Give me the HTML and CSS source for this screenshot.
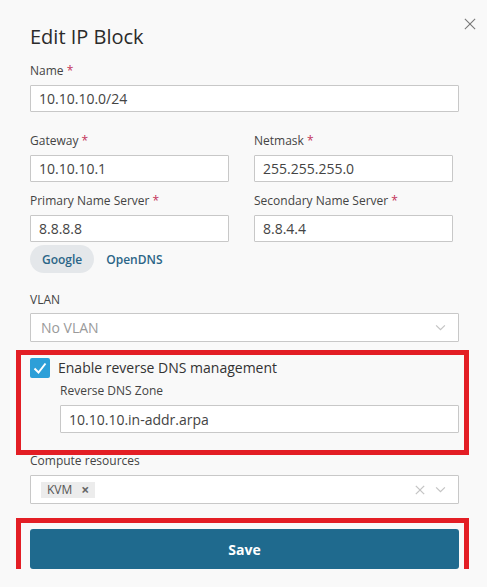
FILE: index.html
```html
<!DOCTYPE html>
<html lang="en">
<head>
    <meta charset="UTF-8">
    <meta name="viewport" content="width=device-width, initial-scale=1.0">
    <title>Edit IP Block</title>
    <link rel="stylesheet" href="styles.css">
</head>
<body>
<div class="modal">
    <button class="close-btn" aria-label="Close">
        <svg viewBox="0 0 14 14" fill="none" stroke="currentColor" stroke-width="1.2">
            <line x1="1" y1="1" x2="13" y2="13"></line>
            <line x1="13" y1="1" x2="1" y2="13"></line>
        </svg>
    </button>

    <h1 class="modal-title">Edit IP Block</h1>

    <form class="ip-form">
        <div class="field field-name">
            <label>Name <span class="req">*</span></label>
            <input class="text-input" type="text" value="10.10.10.0/24">
        </div>

        <div class="row row-gateway">
            <div class="field">
                <label>Gateway <span class="req">*</span></label>
                <input class="text-input" type="text" value="10.10.10.1">
            </div>
            <div class="field">
                <label>Netmask <span class="req">*</span></label>
                <input class="text-input" type="text" value="255.255.255.0">
            </div>
        </div>

        <div class="row row-dns">
            <div class="field">
                <label>Primary Name Server <span class="req">*</span></label>
                <input class="text-input" type="text" value="8.8.8.8">
            </div>
            <div class="field">
                <label>Secondary Name Server <span class="req">*</span></label>
                <input class="text-input" type="text" value="8.8.4.4">
            </div>
        </div>

        <div class="dns-presets">
            <button type="button" class="preset active">Google</button>
            <button type="button" class="preset">OpenDNS</button>
        </div>

        <div class="field field-vlan">
            <label>VLAN</label>
            <div class="select">
                <span class="placeholder">No VLAN</span>
                <span class="select-icons">
                    <svg class="chevron" viewBox="0 0 12 8" fill="none" stroke="currentColor" stroke-width="1.4">
                        <polyline points="1,1.5 6,6.5 11,1.5"></polyline>
                    </svg>
                </span>
            </div>
        </div>

        <div class="reverse-dns highlight">
            <label class="check">
                <span class="check-box">
                    <svg viewBox="0 0 20 20" fill="none" stroke="white" stroke-width="2">
                        <polyline points="4.5,10.5 8.5,14.5 15.5,5.5"></polyline>
                    </svg>
                </span>
                <span>Enable reverse DNS management</span>
            </label>
            <div class="field field-zone">
                <label>Reverse DNS Zone</label>
                <input class="text-input" type="text" value="10.10.10.in-addr.arpa">
            </div>
        </div>

        <div class="field field-compute">
            <label>Compute resources</label>
            <div class="select">
                <span class="tag">KVM <span class="tag-x">&times;</span></span>
                <span class="select-icons">
                    <svg class="clear" viewBox="0 0 12 12" fill="none" stroke="currentColor" stroke-width="1.5">
                        <line x1="1" y1="1" x2="11" y2="11"></line>
                        <line x1="11" y1="1" x2="1" y2="11"></line>
                    </svg>
                    <svg class="chevron" viewBox="0 0 12 8" fill="none" stroke="currentColor" stroke-width="1.4">
                        <polyline points="1,1.5 6,6.5 11,1.5"></polyline>
                    </svg>
                </span>
            </div>
        </div>

        <div class="submit highlight">
            <button type="submit" class="save-btn">Save</button>
        </div>
    </form>
</div>
</body>
</html>
```

FILE: styles.css
```css
* {
    margin: 0;
    padding: 0;
    box-sizing: border-box;
    font-family: "Open Sans", "Liberation Sans", sans-serif;
}

body {
    background-color: #f9f9f9;
    color: #333;
}

.modal {
    position: relative;
    padding: 23px 28px 0 30px;
}

.close-btn {
    position: absolute;
    top: 18px;
    right: 11px;
    width: 12px;
    height: 12px;
    border: none;
    background: none;
    color: #777;
    cursor: pointer;
}

.close-btn svg {
    display: block;
    width: 12px;
    height: 12px;
}

.modal-title {
    font-size: 20px;
    font-weight: 500;
    line-height: 28px;
    color: #2b2b2b;
    margin-bottom: 12px;
}

.field label {
    display: block;
    font-size: 12px;
    line-height: 16px;
    color: #444;
    margin-bottom: 6px;
}

.req {
    color: #c3325a;
}

.text-input {
    display: block;
    width: 100%;
    height: 27px;
    padding: 0 8px;
    border: 1px solid #c8c8c8;
    border-radius: 1px;
    background-color: #fff;
    font-size: 14px;
    color: #444;
    outline: none;
}

.row {
    display: grid;
    grid-template-columns: 199px 199px;
    gap: 25px;
}

.row-gateway {
    margin-top: 21px;
}

.row-dns {
    margin-top: 11px;
}

.dns-presets {
    display: flex;
    margin-top: 3px;
}

.preset {
    height: 28px;
    padding: 0 12px;
    border: none;
    border-radius: 14px;
    background: none;
    font-size: 12px;
    font-weight: 600;
    color: #2b6587;
    cursor: pointer;
}

.preset.active {
    background-color: #e4e7ea;
}

.field-vlan {
    margin-top: 19px;
}

.field-vlan label {
    margin-bottom: 5px;
}

.select {
    display: flex;
    align-items: center;
    height: 29px;
    padding: 0 12px 0 10px;
    border: 1px solid #c8c8c8;
    border-radius: 1px;
    background-color: #fff;
}

.placeholder {
    font-size: 14px;
    color: #9a9a9a;
}

.select-icons {
    margin-left: auto;
    display: flex;
    align-items: center;
    gap: 10px;
    color: #c4c4c4;
}

.chevron {
    width: 11px;
    height: 7px;
}

.clear {
    width: 10px;
    height: 10px;
}

/* Annotation frame drawn around a block */
.highlight {
    position: relative;
}

.highlight::after {
    content: "";
    position: absolute;
    left: -14px;
    right: -10px;
    border: 5px solid #e31e25;
    pointer-events: none;
}

.reverse-dns {
    margin-top: 16px;
}

.reverse-dns::after {
    top: -8px;
    bottom: -22px;
}

.check {
    display: flex;
    align-items: center;
    gap: 8px;
    font-size: 14px;
    color: #333;
    line-height: 20px;
}

.check-box {
    width: 20px;
    height: 20px;
    border-radius: 2px;
    background-color: #2d9fd8;
}

.check-box svg {
    display: block;
    width: 20px;
    height: 20px;
}

.field-zone {
    margin-top: 5px;
    margin-left: 30px;
}

.field-zone .text-input {
    height: 28px;
}

.field-compute {
    margin-top: 20px;
}

.tag {
    display: inline-flex;
    align-items: center;
    gap: 9px;
    height: 16px;
    padding: 0 6px;
    background-color: #ececec;
    font-size: 12px;
    color: #555;
}

.tag-x {
    font-size: 14px;
    font-weight: 700;
    color: #666;
}

.submit {
    margin-top: 25px;
}

.submit::after {
    top: -11px;
    bottom: -9px;
}

.save-btn {
    display: block;
    width: 100%;
    height: 40px;
    border: none;
    border-radius: 3px;
    background-color: #1f6a8e;
    color: #fff;
    font-size: 14px;
    font-weight: 700;
    cursor: pointer;
}
```
